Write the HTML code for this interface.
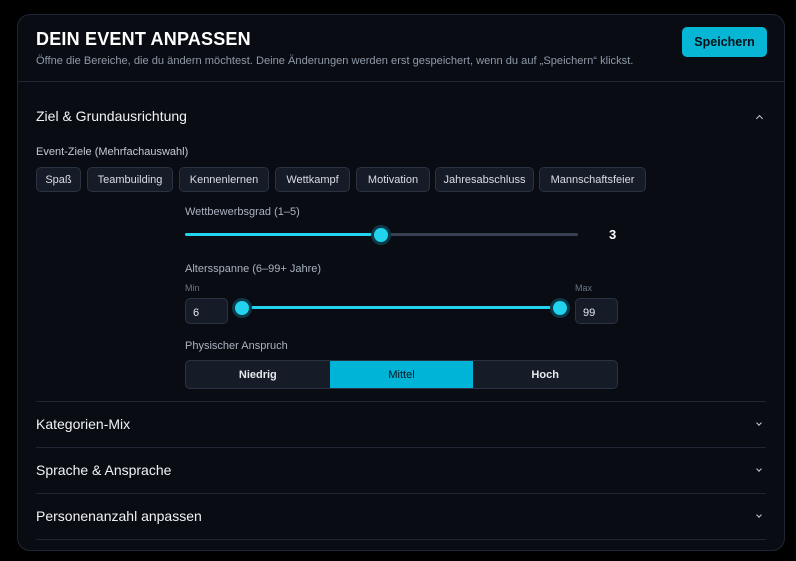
<!DOCTYPE html>
<html><head><meta charset="utf-8"><style>
*{box-sizing:border-box;margin:0;padding:0}
body{width:796px;height:561px;background:#000;font-family:"Liberation Sans",sans-serif;position:relative;overflow:hidden;color:#e6e9ee}
.card{position:absolute;left:17px;top:14px;width:768px;height:537px;background:#090c13;border:1px solid #1f2633;border-radius:13px}
.abs{position:absolute;white-space:nowrap}
.hr{position:absolute;left:18px;width:730px;height:1px;background:#1f2633}
.chip{position:absolute;top:152px;height:25px;border:1px solid #2a3342;background:#161c27;border-radius:5px;font-size:11px;color:#d8dde5;display:flex;align-items:center;justify-content:center}
.lbl{font-size:11px;color:#aab3c0}
.sec{font-size:14px;color:#f1f3f6}
.chev{position:absolute;left:739px;width:6px;height:6px;border-right:1.3px solid #c8cdd4;border-bottom:1.3px solid #c8cdd4;transform:rotate(45deg)}
.thumb{position:absolute;width:14px;height:14px;border-radius:50%;background:#22d3ee;box-shadow:0 0 0 3px #0b3a48}
.inp{position:absolute;height:26px;border:1px solid #2a3342;background:#161c27;border-radius:5px;font-size:11px;padding:8px 0 0 7px;color:#e6e9ee}
</style></head><body>
<div class="card">
 <div class="abs" style="left:18px;top:14px;font-size:18px;font-weight:bold;color:#fff;letter-spacing:0.2px">DEIN EVENT ANPASSEN</div>
 <div class="abs" style="left:18px;top:40px;font-size:11.1px;color:#8f9aa8">Öffne die Bereiche, die du ändern möchtest. Deine Änderungen werden erst gespeichert, wenn du auf „Speichern“ klickst.</div>
 <div class="abs" style="left:664px;top:12px;width:85px;height:30px;background:#06b6d4;border-radius:5px;color:#061018;font-weight:bold;font-size:12.5px;display:flex;align-items:center;justify-content:center">Speichern</div>
 <div class="hr" style="left:0;width:766px;top:66px"></div>
 <div class="abs sec" style="left:18px;top:93px">Ziel &amp; Grundausrichtung</div>
 <div class="chev" style="top:101px;width:5px;height:5px;transform:rotate(-135deg)"></div>
 <div class="abs lbl" style="left:18px;top:131px;color:#c3cad4">Event-Ziele (Mehrfachauswahl)</div>
 <div class="chip" style="left:18px;width:45px">Spaß</div>
 <div class="chip" style="left:69px;width:86px">Teambuilding</div>
 <div class="chip" style="left:161px;width:90px">Kennenlernen</div>
 <div class="chip" style="left:257px;width:75px">Wettkampf</div>
 <div class="chip" style="left:338px;width:74px">Motivation</div>
 <div class="chip" style="left:417px;width:99px">Jahresabschluss</div>
 <div class="chip" style="left:521px;width:107px">Mannschaftsfeier</div>
 <div class="abs lbl" style="left:167px;top:191px">Wettbewerbsgrad (1–5)</div>
 <div class="abs" style="left:167px;top:218px;width:393px;height:3px;background:#374151;border-radius:2px"></div>
 <div class="abs" style="left:167px;top:218px;width:197px;height:3px;background:#22d3ee;border-radius:2px"></div>
 <div class="thumb" style="left:356px;top:213px"></div>
 <div class="abs" style="left:591px;top:212px;font-size:13px;font-weight:bold;color:#fff">3</div>
 <div class="abs lbl" style="left:167px;top:248px">Altersspanne (6–99+ Jahre)</div>
 <div class="abs" style="left:167px;top:268px;font-size:9px;color:#6b7684">Min</div>
 <div class="abs" style="left:557px;top:268px;font-size:9px;color:#6b7684">Max</div>
 <div class="inp" style="left:167px;top:283px;width:43px">6</div>
 <div class="inp" style="left:557px;top:283px;width:43px">99</div>
 <div class="abs" style="left:223px;top:291px;width:318px;height:3px;background:#22d3ee"></div>
 <div class="thumb" style="left:217px;top:286px"></div>
 <div class="thumb" style="left:535px;top:286px"></div>
 <div class="abs lbl" style="left:167px;top:325px">Physischer Anspruch</div>
 <div class="abs" style="left:167px;top:345px;width:433px;height:29px;border:1px solid #2a3342;border-radius:5px;background:#161c27;overflow:hidden;display:flex;font-size:11px">
  <div style="flex:1;display:flex;align-items:center;justify-content:center;font-weight:bold">Niedrig</div>
  <div style="flex:1;display:flex;align-items:center;justify-content:center;background:#00b4d8;color:#0a1620">Mittel</div>
  <div style="flex:1;display:flex;align-items:center;justify-content:center;font-weight:bold">Hoch</div>
 </div>
 <div class="hr" style="top:386px"></div>
 <div class="abs sec" style="left:18px;top:401px">Kategorien-Mix</div>
 <div class="chev" style="top:406px;width:4px;height:4px"></div>
 <div class="hr" style="top:432px"></div>
 <div class="abs sec" style="left:18px;top:447px">Sprache &amp; Ansprache</div>
 <div class="chev" style="top:452px;width:4px;height:4px"></div>
 <div class="hr" style="top:478px"></div>
 <div class="abs sec" style="left:18px;top:493px">Personenanzahl anpassen</div>
 <div class="chev" style="top:498px;width:4px;height:4px"></div>
 <div class="hr" style="top:524px"></div>
</div>
</body></html>
